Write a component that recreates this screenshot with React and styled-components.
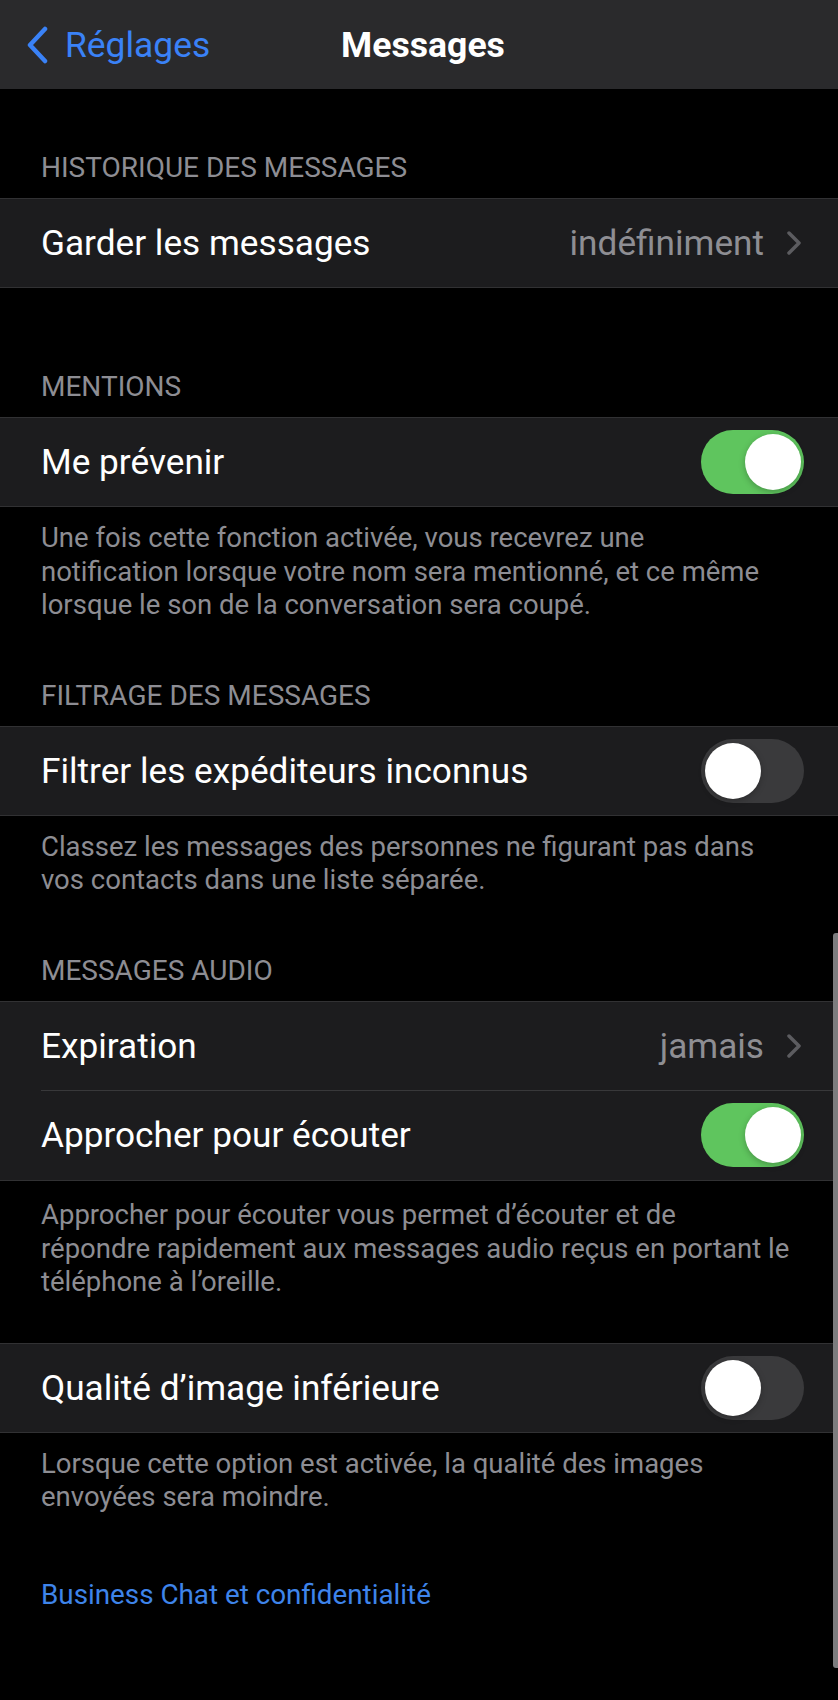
import React, { useState } from 'react';
import styled, { createGlobalStyle } from 'styled-components';

const GlobalStyle = createGlobalStyle`
  html, body {
    margin: 0;
    padding: 0;
    background: #000;
  }
  body {
    font-family: Roboto, "Liberation Sans", sans-serif;
    -webkit-font-smoothing: antialiased;
  }
`;

const Page = styled.div`
  position: relative;
  min-height: 1700px;
  background: #000;
  color: #fff;
  overflow: hidden;
`;

const NavBar = styled.header`
  height: 89px;
  background: #2a2a2c;
  display: grid;
  grid-template-columns: 1fr auto 1fr;
  align-items: center;
`;

const BackButton = styled.button`
  justify-self: start;
  display: flex;
  align-items: center;
  gap: 16px;
  padding: 0 0 0 26px;
  background: none;
  border: none;
  color: #3a82f7;
  font-family: inherit;
  font-size: 35.4px;
  cursor: pointer;
`;

const NavTitle = styled.h1`
  margin: 0;
  font-size: 35.6px;
  font-weight: 700;
  padding-left: 8px;
`;

const Section = styled.section`
  padding-top: ${(p) => p.$top}px;
`;

const Header = styled.div`
  padding: 0 41px 13px;
  font-size: 28px;
  line-height: 34px;
  color: #8d8d93;
  text-transform: uppercase;
`;

const Group = styled.div`
  background: #1c1c1e;
  border-top: 1px solid #313133;
  border-bottom: 1px solid #313133;
`;

const Row = styled.div`
  height: ${(p) => (p.$first ? 88 : 89)}px;
  display: flex;
  align-items: center;
  gap: 16px;
  padding-right: 34px;
  padding-left: ${(p) => (p.$first ? 41 : 0)}px;
  margin-left: ${(p) => (p.$first ? 0 : 41)}px;
  border-top: ${(p) => (p.$first ? 'none' : '1px solid #38383a')};
`;

const Label = styled.span`
  flex: 1;
  font-size: 35.2px;
  color: #fff;
`;

const Value = styled.span`
  font-size: 35.2px;
  color: #8e8e93;
`;

const Chevron = styled.svg`
  width: 17px;
  height: 24px;
  margin-left: 6px;
  margin-right: 1px;
`;

const Track = styled.button`
  position: relative;
  width: 103px;
  height: 64px;
  flex: none;
  border: none;
  border-radius: 32px;
  padding: 0;
  background: ${(p) => (p.$on ? '#5fc55e' : '#3a3a3c')};
  cursor: pointer;
`;

const Knob = styled.span`
  position: absolute;
  top: 4px;
  left: ${(p) => (p.$on ? 44 : 4)}px;
  width: 56px;
  height: 56px;
  border-radius: 50%;
  background: #fff;
  box-shadow: 0 2px 6px rgba(0, 0, 0, 0.25);
`;

const Footer = styled.p`
  margin: 0;
  padding: ${(p) => p.$top || 14}px 12px 0 41px;
  font-size: 27.5px;
  line-height: 33.6px;
  color: #8d8d93;
`;

const Link = styled.a`
  display: block;
  padding: 64px 41px 0;
  font-size: 27.8px;
  line-height: 34px;
  color: #3e84ea;
  text-decoration: none;
`;

const ScrollIndicator = styled.div`
  position: absolute;
  right: 0;
  top: 933px;
  width: 5px;
  height: 735px;
  background: #7c7c7e;
  border-radius: 3px 0 0 3px;
`;

function Toggle({ on, onChange }) {
  return (
    <Track $on={on} onClick={() => onChange(!on)} aria-pressed={on}>
      <Knob $on={on} />
    </Track>
  );
}

function RowChevron() {
  return (
    <Chevron viewBox="0 0 17 24">
      <path d="M3 2 L13 12 L3 22" fill="none" stroke="#5c5c60" strokeWidth="3.5" strokeLinecap="round" strokeLinejoin="round" />
    </Chevron>
  );
}

export default function App() {
  const [mentions, setMentions] = useState(true);
  const [filter, setFilter] = useState(false);
  const [raise, setRaise] = useState(true);
  const [lowQuality, setLowQuality] = useState(false);

  return (
    <Page>
      <GlobalStyle />
      <NavBar>
        <BackButton>
          <svg width="23" height="38" viewBox="0 0 23 38">
            <path d="M19 3 L4 19 L19 35" fill="none" stroke="#3a82f7" strokeWidth="4.5" strokeLinecap="round" strokeLinejoin="round" />
          </svg>
          Réglages
        </BackButton>
        <NavTitle>Messages</NavTitle>
        <span />
      </NavBar>

      <Section $top={62}>
        <Header>Historique des messages</Header>
        <Group>
          <Row $first>
            <Label>Garder les messages</Label>
            <Value>indéfiniment</Value>
            <RowChevron />
          </Row>
        </Group>
      </Section>

      <Section $top={82}>
        <Header>Mentions</Header>
        <Group>
          <Row $first>
            <Label>Me prévenir</Label>
            <Toggle on={mentions} onChange={setMentions} />
          </Row>
        </Group>
        <Footer>
          Une fois cette fonction activée, vous recevrez une<br />
          notification lorsque votre nom sera mentionné, et ce même<br />
          lorsque le son de la conversation sera coupé.
        </Footer>
      </Section>

      <Section $top={57}>
        <Header>Filtrage des messages</Header>
        <Group>
          <Row $first>
            <Label>Filtrer les expéditeurs inconnus</Label>
            <Toggle on={filter} onChange={setFilter} />
          </Row>
        </Group>
        <Footer>
          Classez les messages des personnes ne figurant pas dans<br />
          vos contacts dans une liste séparée.
        </Footer>
      </Section>

      <Section $top={57}>
        <Header>Messages audio</Header>
        <Group>
          <Row $first>
            <Label>Expiration</Label>
            <Value>jamais</Value>
            <RowChevron />
          </Row>
          <Row>
            <Label>Approcher pour écouter</Label>
            <Toggle on={raise} onChange={setRaise} />
          </Row>
        </Group>
        <Footer $top={17}>
          Approcher pour écouter vous permet d’écouter et de<br />
          répondre rapidement aux messages audio reçus en portant le<br />
          téléphone à l’oreille.
        </Footer>
      </Section>

      <Section $top={44}>
        <Group>
          <Row $first>
            <Label>Qualité d’image inférieure</Label>
            <Toggle on={lowQuality} onChange={setLowQuality} />
          </Row>
        </Group>
        <Footer>
          Lorsque cette option est activée, la qualité des images<br />
          envoyées sera moindre.
        </Footer>
      </Section>

      <Link href="#">Business Chat et confidentialité</Link>

      <ScrollIndicator />
    </Page>
  );
}
